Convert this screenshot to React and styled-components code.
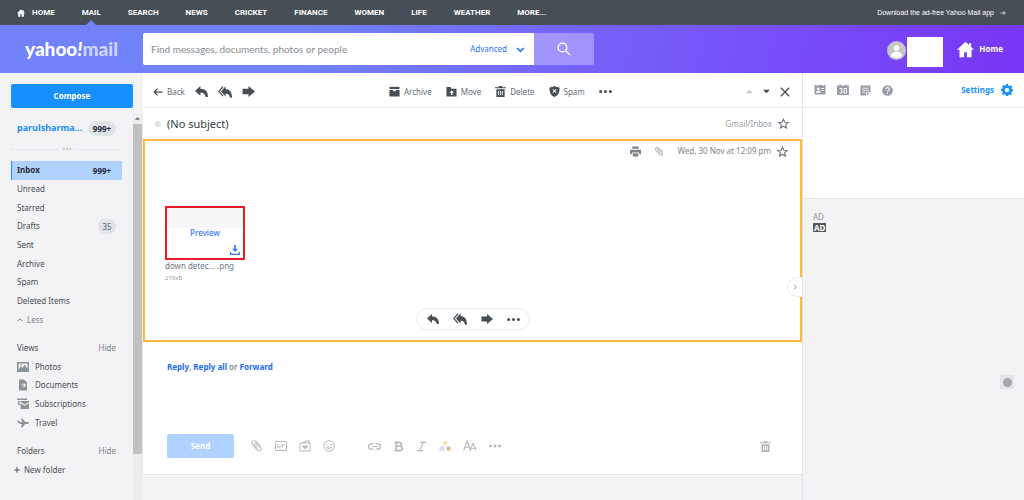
import React from "react";
import styled, { createGlobalStyle } from "styled-components";

const sans = `"Noto Sans", "Open Sans", sans-serif`;

const Global = createGlobalStyle`
  *, *::before, *::after { box-sizing: border-box; }
  body { margin: 0; background: #f3f3f5; font-family: ${sans}; font-size: 8px; line-height: 12px; color: #545c64; }
  button, input { font: inherit; color: inherit; margin: 0; padding: 0; border: 0; background: none; }
  button { cursor: pointer; }
  a { color: inherit; text-decoration: none; }
  ul { list-style: none; margin: 0; padding: 0; }
  h1, h2, p { margin: 0; }
  svg { display: block; flex: none; }
`;

/* ---------- icons ---------- */

const shapes = {
  house: <path d="M12 1 0 12.500h3.500V23H10v-7h4v7h6.500V12.500H24L20 8.500V3h-3v2.700z" />,
  reply: <path d="M10 2 0 11l10 9v-5.500c4.500 0 7.500 1 10 7.500h4c0-10-5-15-14-15z" />,
  replyAll: (
    <>
      <path d="M13 2 5 11l8 8.500V15c4 0 6 1 8 7h3c0-10-4-14.500-11-15z" />
      <path d="M8.500 3 1.500 11l7 8" fill="none" stroke="currentColor" strokeWidth="2.200" />
    </>
  ),
  forward: <path d="M1 7h11V2l12 10-12 10v-5H1z" />,
  back: <path d="M11 4 3 12l8 8M3 12h20" fill="none" stroke="currentColor" strokeWidth="3" />,
  right: <path d="M14 5l7 7-7 7M21 12H2" fill="none" stroke="currentColor" strokeWidth="3" />,
  archive: (
    <>
      <path d="M1 2h22v4.500H1z" />
      <path d="M1 8.500h7.500l1.500 3h4l1.500-3H23V23H1z" />
    </>
  ),
  move: <path fillRule="evenodd" d="M1 2h9l2 4h11v17H1zM12.500 9l-5 5.500H11v5h3v-5h3.500z" />,
  trash: (
    <>
      <path d="M8 0h8v2.500h8V5H0V2.500h8z" />
      <path fillRule="evenodd" d="M3 7h18v17H3zm4 4v9h2V11zm4 0v9h2V11zm4 0v9h2V11z" />
    </>
  ),
  spam: (
    <path
      fillRule="evenodd"
      d="M12 0c3 2 7 3 11 3 0 10-2 17-11 21C3 20 1 13 1 3c4 0 8-1 11-3zM9 6.500 7.500 8l3 3-3 3L9 15.500l3-3 3 3 1.500-1.500-3-3 3-3L15 6.500l-3 3z"
    />
  ),
  more: (
    <>
      <circle cx="3" cy="12" r="2.800" />
      <circle cx="12" cy="12" r="2.800" />
      <circle cx="21" cy="12" r="2.800" />
    </>
  ),
  up: <path d="M0 18 12 6l12 12z" />,
  down: <path d="M0 6l12 12L24 6z" />,
  close: <path d="M2 2l20 20M22 2 2 22" fill="none" stroke="currentColor" strokeWidth="3.200" />,
  star: (
    <path
      d="M12 2.500l3 6.700 7.500.5-5.800 4.900 1.900 7.400L12 18l-6.600 4 1.900-7.400L1.500 9.700 9 9.200z"
      fill="none"
      stroke="currentColor"
      strokeWidth="2.400"
    />
  ),
  printer: (
    <>
      <path d="M5 1h14v5H5zM0 8h24v10h-4v-4H4v4H0z" />
      <path d="M6 16h12v7H6z" />
    </>
  ),
  clip: (
    <path
      transform="rotate(45 12 12)"
      d="M18 7H4a5 5 0 0 0 0 10h16a3.800 3.800 0 0 0 0-7.500H7a2 2 0 0 0 0 4.500h10"
      fill="none"
      stroke="currentColor"
      strokeWidth="1.900"
    />
  ),
  search: <path d="M15 15l7.500 7.500M17 9.500a7.500 7.500 0 1 1-15 0 7.500 7.500 0 0 1 15 0z" fill="none" stroke="currentColor" strokeWidth="2.200" />,
  chevDown: <path d="M3 8l9 9 9-9" fill="none" stroke="currentColor" strokeWidth="4.500" />,
  chevUp: <path d="M2 17l10-10 10 10" fill="none" stroke="currentColor" strokeWidth="4" />,
  chevRight: <path d="M8 3l9 9-9 9" fill="none" stroke="currentColor" strokeWidth="4" />,
  plus: <path d="M12 1v22M1 12h22" fill="none" stroke="currentColor" strokeWidth="4" />,
  contacts: (
    <path
      fillRule="evenodd"
      d="M1 2h4v2h2V2h10v2h2V2h4v19H1zM8.500 7a2.700 2.700 0 1 0 0 5.400 2.700 2.700 0 0 0 0-5.400zM4 17.500h9c0-3-2-4-4.500-4S4 14.500 4 17.500zM15 8v2h5V8zm0 4v2h5v-2z"
    />
  ),
  calendar: (
    <>
      <path d="M0 3h5V1h3v2h8V1h3v2h5v19H0z" />
      <path
        d="M5 9h5v4.500H7m3 0V18H5M14 9h5v9h-5z"
        fill="none"
        stroke="#fff"
        strokeWidth="1.900"
      />
    </>
  ),
  note: (
    <>
      <path d="M1 1h22v14l-8 8H1z" />
      <path d="M5 7h14M5 11.500h14M5 16h6M14 23v-7h9" fill="none" stroke="#fff" strokeWidth="1.800" />
    </>
  ),
  help: (
    <>
      <circle cx="12" cy="12" r="11.500" />
      <path d="M8 9.500C8 4.500 16 4.500 16 9.500c0 3-4 2.500-4 5.500M12 17v2.500" fill="none" stroke="#fff" strokeWidth="2.300" />
    </>
  ),
  gear: (
    <path
      fillRule="evenodd"
      d="M10 0h4l.7 3.300 2.100.9L19.700 2.400l2.800 2.900-1.800 2.800.9 2L24 10.500v4l-2.800.5-.9 2.100 1.700 2.700-2.800 2.800-2.700-1.700-2 .9L14 24h-4l-.6-2.800-2.100-.9-2.700 1.700L1.800 19.200l1.700-2.700-.9-2L0 14v-4l2.800-.6.9-2.100L2 4.600 4.800 1.800l2.700 1.700 2-.9zM12 7.500a4.500 4.500 0 1 0 0 9 4.500 4.500 0 0 0 0-9z"
    />
  ),
  photos: (
    <path
      fillRule="evenodd"
      d="M0 2h24v20H0zM3 5v12l5-7 3 4 4-7 6 9V5zM7 6.500h3v2H7z"
    />
  ),
  document: (
    <path fillRule="evenodd" d="M4 1h10l6 6v16H4zM13 9a3.500 3.500 0 1 0 2 6.500h2V9h-2v1zM12 11a1.800 1.800 0 1 1 0 3.600 1.800 1.800 0 0 1 0-3.600z" />
  ),
  subscriptions: (
    <>
      <path d="M0 1h20v3H0zM2 6h3v8H2z" />
      <path d="M7 6h17v2l-8.500 5L7 8zM7 10.500l8.500 5 8.500-5V22H7z" />
    </>
  ),
  plane: (
    <path d="M0 7h3l3 3h5L8 3h3l6 7h5q4 2 0 4h-6l-5 7H8l2-7H6Q2 13 0 7z" />
  ),
  download: <path d="M10 0h4v9h5l-7 8-7-8h5zM0 17h3v4h18v-4h3v7H0z" />,
  gif: (
    <>
      <rect x="1" y="3" width="22" height="18" rx="1" fill="none" stroke="currentColor" strokeWidth="2" />
      <path d="M9 9.500H5.500v5H9V12M12 9v6M19 9.500h-4V15M15 12h3.500" fill="none" stroke="currentColor" strokeWidth="1.500" />
    </>
  ),
  card: (
    <>
      <path d="M2 6h20v16H2zM6 5l14-4 1 5" fill="none" stroke="currentColor" strokeWidth="2" />
      <path d="M12 19l-5-5c-1-4 4-5 5-2 1-3 6-2 5 2z" />
    </>
  ),
  smile: (
    <>
      <circle cx="12" cy="12" r="10.500" fill="none" stroke="currentColor" strokeWidth="2" />
      <path d="M7 14c1 5 9 5 10 0z" fill="none" stroke="currentColor" strokeWidth="1.800" />
      <circle cx="8" cy="9" r="1.500" />
      <circle cx="16" cy="9" r="1.500" />
    </>
  ),
  link: (
    <path
      d="M10 17H6a5 5 0 0 1 0-10h4M14 7h4a5 5 0 0 1 0 10h-4M7 12h10"
      fill="none"
      stroke="currentColor"
      strokeWidth="2.200"
    />
  ),
  bold: <path d="M3 3h11a4.200 4.200 0 0 1 0 8.500H7h8a4.700 4.700 0 0 1 0 9.500H3M7 3v18" fill="none" stroke="currentColor" strokeWidth="3.600" />,
  italic: <path d="M9 3h13M2 21h13M16 3 8 21" fill="none" stroke="currentColor" strokeWidth="2.600" />,
  colors: (
    <>
      <circle cx="12" cy="6" r="4" fill="#fbdc9b" />
      <circle cx="6" cy="17" r="5.500" fill="#dcdffb" />
      <circle cx="19" cy="17" r="4.500" fill="#dfb98d" />
    </>
  ),
  fontSize: (
    <path d="M1 20 7 3l6 17M3 14h8M12 20l5.500-13L23 20M14 16h7" fill="none" stroke="currentColor" strokeWidth="1.800" />
  ),
};

const Svg = styled.svg.attrs({ viewBox: "0 0 24 24", fill: "currentColor", "aria-hidden": true })`
  width: ${(p) => p.$size}px;
  height: ${(p) => p.$size}px;
`;

const Icon = ({ name, size = 12 }) => <Svg $size={size}>{shapes[name]}</Svg>;

/* ---------- frame ---------- */

const Page = styled.div`
  min-height: 100vh;
  display: flex;
  flex-direction: column;
`;

const TopBar = styled.nav`
  height: 25px;
  padding: 0 18px 0 17px;
  display: flex;
  align-items: center;
  justify-content: space-between;
  background: #464e56;
  color: #fff;
  font-family: Roboto, "Liberation Sans", sans-serif;
`;

const TopLinks = styled.div`
  height: 100%;
  display: flex;
  gap: 27px;
`;

const TopLink = styled.a`
  position: relative;
  display: flex;
  align-items: center;
  gap: 7px;
  font-weight: 700;

  &[aria-current]::after {
    content: "";
    position: absolute;
    bottom: 0;
    left: 50%;
    margin-left: -5px;
    border: 5px solid transparent;
    border-top: 0;
    border-bottom-color: #7182fb;
  }
`;

const AppLink = styled.a`
  display: flex;
  align-items: center;
  gap: 6px;
  font-family: "Liberation Sans", Arial, sans-serif;
  font-size: 7px;
`;

const Header = styled.header`
  height: 48px;
  padding-right: 21px;
  display: flex;
  align-items: center;
  background: linear-gradient(100deg, #7182fb 0%, #7182fb 30%, #7561f9 58%, #7835f5 100%);
  color: #fff;
`;

const Logo = styled.a`
  width: 143px;
  padding-left: 25px;
  font-family: Lato, "Open Sans", sans-serif;
  font-size: 19px;
  line-height: 24px;
  font-weight: 900;

  span { color: #cdd5fd; }
`;

const Search = styled.form`
  flex: 0 1 451px;
  height: 32px;
  display: flex;
  border-radius: 2px;
  overflow: hidden;
`;

const SearchField = styled.div`
  flex: 1;
  min-width: 0;
  padding: 0 9px 0 8px;
  display: flex;
  align-items: center;
  background: #fff;
`;

const SearchInput = styled.input`
  flex: 1;
  min-width: 0;
  height: 100%;
  outline: 0;
  font-family: Lato, ${sans};
  font-size: 10px;
  color: #5b636a;

  &::placeholder { color: #878d94; opacity: 1; }
`;

const Advanced = styled.button`
  display: flex;
  align-items: center;
  gap: 9px;
  color: #2673fb;
`;

const SearchButton = styled.button`
  width: 60px;
  display: grid;
  place-items: center;
  background: #a094fd;
`;

const Account = styled.div`
  margin-left: auto;
  display: flex;
  align-items: center;
`;

const Avatar = styled.button`
  width: 19px;
  height: 19px;
  margin-top: 3px;
  border-radius: 50%;
  background: #c5c5c5;
  overflow: hidden;
  color: #fff;
`;

const NameBox = styled.div`
  width: 36px;
  height: 30px;
  margin: 6px 14px 0 1px;
  background: #fff;
`;

const HomeLink = styled.a`
  display: flex;
  align-items: center;
  gap: 5px;
  font-weight: 700;
`;

const Body = styled.div`
  flex: 1;
  display: flex;
`;

/* ---------- sidebar ---------- */

const Sidebar = styled.aside`
  flex: none;
  width: 143px;
  display: flex;
  flex-direction: column;
  background: #f3f3f5;
`;

const Compose = styled.button`
  height: 24px;
  margin: 11px 10px 5px 11px;
  border-radius: 2px;
  background: #188fff;
  color: #fff;
  font-weight: 700;
`;

const ScrollArea = styled.div`
  flex: 1;
  display: flex;
`;

const Folders = styled.div`
  flex: 1;
  min-width: 0;
  padding: 6px 11px 21px 11px;
`;

const Mailbox = styled.div`
  height: 18px;
  padding: 0 6px;
  display: flex;
  align-items: center;
  justify-content: space-between;
  color: #188fff;
  font-size: 9px;
  font-weight: 700;
`;

const Badge = styled.span`
  min-width: ${(p) => (p.$small ? 18 : 28)}px;
  height: 15px;
  border-radius: 8px;
  text-align: center;
  line-height: 15px;
  font-size: 8px;
  font-weight: ${(p) => (p.$small ? 400 : 700)};
  color: ${(p) => (p.$small ? "#5b636a" : "#232a31")};
  background: ${(p) => (p.$plain ? "none" : "#dfe4ea")};
`;

const Divider = styled.div`
  height: 12px;
  margin: 6px 0 6px;
  display: flex;
  align-items: center;
  gap: 4px;
  color: #b4bac0;

  &::before, &::after { content: ""; flex: 1; border-top: 1px dotted #dcdfe3; }
`;

const List = styled.ul`
  height: ${(p) => p.$height}px;
  margin-bottom: 10px;
  display: grid;
  grid-auto-rows: 1fr;
`;

const Row = styled.li`
  display: flex;
  align-items: center;
  justify-content: space-between;
  padding: 0 6px;
  color: #464e56;

  ${(p) =>
    p.$active &&
    `
    padding-left: 5px;
    border-left: 1px solid #188fff;
    background: #b1d2ff;
    color: #232a31;
    font-weight: 700;
  `}
`;

const RowLink = styled.a`
  display: flex;
  align-items: center;
  gap: ${(p) => p.$gap || 0}px;
  margin-left: ${(p) => (p.$outdent ? -3 : 0)}px;

  svg { color: ${(p) => (p.$muted ? "#8b929b" : "inherit")}; }
`;

const Quiet = styled.button`
  color: #7d848b;
  display: flex;
  align-items: center;
  gap: 4px;
`;

const ScrollBar = styled.div`
  width: 10px;
  padding: 3px 1px 3px 0;
  display: flex;
  flex-direction: column;
  align-items: center;
  background: #ededef;
  color: #62676c;
`;

const Thumb = styled.div`
  flex: 1;
  align-self: stretch;
  margin: 3px 0 48px;
  background: #c1c1c1;
`;

/* ---------- message column ---------- */

const Main = styled.main`
  flex: 1;
  min-width: 0;
  border-right: 1px solid #e0e4e9;
`;

const Toolbar = styled.div`
  height: 35px;
  padding: 3px 12px 0 10px;
  display: flex;
  align-items: center;
  justify-content: space-between;
  background: #fff;
  border-bottom: 1px solid #ebecef;
  color: #464e56;
`;

const Group = styled.div`
  display: flex;
  align-items: center;
  gap: ${(p) => p.$gap}px;
`;

const Tool = styled.button`
  display: flex;
  align-items: center;
  gap: 4px;
  color: ${(p) => p.$color || "#464e56"};

  span { color: #646d75; }
`;

const Subject = styled.div`
  height: 31px;
  padding: 0 13px 0 12px;
  display: flex;
  align-items: center;
  gap: 6px;
  background: #fff;

  h1 { flex: 1; font-size: 11px; line-height: 16px; font-weight: 400; color: #343c44; }
  span { color: #979ea8; }
`;

const Dot = styled.i`
  width: 6px;
  height: 6px;
  border-radius: 50%;
  background: #dfe4ea;
`;

const Message = styled.article`
  position: relative;
  height: 203px;
  padding: 2px 12px 10px 20px;
  display: flex;
  flex-direction: column;
  background: #fff;
  border: 2px solid #fdb93d;
`;

const Meta = styled.div`
  display: flex;
  align-items: center;
  justify-content: flex-end;
  height: 16px;
  color: #7d848b;
`;

const Attachment = styled.figure`
  margin: 47px 0 auto;
  width: 80px;

  figcaption { color: #6e777f; white-space: nowrap; }
  small { display: block; font-size: 6px; color: #979ea8; }
`;

const Thumbnail = styled.button`
  position: relative;
  display: block;
  width: 80px;
  height: 54px;
  border: 2px solid #eb1c26;
  background: linear-gradient(#f8f8f9 20px, #fff 20px);
  color: #3478fb;
  font-weight: 500;

  svg { position: absolute; right: 3px; bottom: 3px; }
`;

const Actions = styled.div`
  align-self: center;
  height: 22px;
  margin-left: -8px;
  padding: 0 9px 0 10px;
  display: flex;
  align-items: center;
  gap: 14px;
  border: 1px solid #ebecef;
  border-radius: 11px;
`;

const Expand = styled.button`
  position: absolute;
  right: -2px;
  top: 136px;
  width: 15px;
  height: 20px;
  display: grid;
  place-items: center;
  border: 1px solid #ebecef;
  border-right: 0;
  border-radius: 10px 0 0 10px;
  background: #fff;
  color: #979ea8;
`;

const Composer = styled.section`
  height: 133px;
  padding: 19px 31px 16px 24px;
  display: flex;
  flex-direction: column;
  justify-content: space-between;
  background: #fff;
  border-bottom: 1px solid #e3e5e9;

  p { color: #7d848b; font-weight: 600; }
  p a { color: #1d6bfb; font-weight: 700; }
`;

const ComposeBar = styled.div`
  display: flex;
  align-items: center;
  color: #b4b7bc;

  & > :last-child { margin-left: auto; }
`;

const Send = styled.button`
  width: 67px;
  height: 24px;
  margin-right: 17px;
  border-radius: 2px;
  background: #b1d2ff;
  color: #fff;
  font-weight: 700;
`;

/* ---------- right column ---------- */

const Rail = styled.aside`
  flex: none;
  width: 221px;
`;

const RailTop = styled.div`
  height: 126px;
  background: #fff;
  border-bottom: 1px solid #e3e5e9;
`;

const RailTools = styled.div`
  height: 35px;
  padding: 0 11px;
  display: flex;
  align-items: center;
  justify-content: space-between;
  border-bottom: 1px solid #ebecef;
`;

const Settings = styled.button`
  display: flex;
  align-items: center;
  gap: 7px;
  color: #188fff;
  font-weight: 700;
`;

const Ad = styled.div`
  padding: 12px 10px;
  color: #8d949c;
  display: flex;
  flex-direction: column;
  align-items: flex-start;

  b { height: 9px; padding: 0 1px; background: #55585c; color: #fff; line-height: 9px; }
`;

const Info = styled.button`
  display: grid;
  place-items: center;
  width: 14px;
  height: 14px;
  margin: 131px 10px 0 auto;
  background: #e4e4e6;

  &::before { content: ""; width: 9px; height: 9px; border-radius: 50%; background: #a5a7ae; }
`;

const topItems = ["MAIL", "SEARCH", "NEWS", "CRICKET", "FINANCE", "WOMEN", "LIFE", "WEATHER", "MORE..."];
const folders = ["Unread", "Starred", "Drafts", "Sent", "Archive", "Spam", "Deleted Items"];
const views = [
  ["photos", "Photos"],
  ["document", "Documents"],
  ["subscriptions", "Subscriptions"],
  ["plane", "Travel"],
];

const IconTool = ({ name, label, size, color }) => (
  <Tool type="button" aria-label={label} $color={color}>
    <Icon name={name} size={size} />
  </Tool>
);

export default function App() {
  return (
    <Page>
      <Global />
      <TopBar>
        <TopLinks>
          <TopLink href="#home">
            <Icon name="house" size={8} />
            HOME
          </TopLink>
          {topItems.map((t) => (
            <TopLink key={t} href="#top" aria-current={t === "MAIL" ? "page" : undefined}>
              {t}
            </TopLink>
          ))}
        </TopLinks>
        <AppLink href="#app">
          Download the ad-free Yahoo Mail app <Icon name="right" size={6} />
        </AppLink>
      </TopBar>

      <Header>
        <Logo href="#mail">
          yahoo<em>!</em>
          <span>mail</span>
        </Logo>
        <Search>
          <SearchField>
            <SearchInput
              type="text"
              aria-label="Search mail"
              placeholder="Find messages, documents, photos or people"
            />
            <Advanced type="button">
              Advanced <Icon name="chevDown" size={9} />
            </Advanced>
          </SearchField>
          <SearchButton type="button" aria-label="Search">
            <Icon name="search" size={14} />
          </SearchButton>
        </Search>
        <Account>
          <Avatar aria-label="Account">
            <svg width="19" height="19" viewBox="0 0 19 19" fill="currentColor" aria-hidden="true">
              <circle cx="9.500" cy="7" r="2.800" />
              <path d="M4 15c0-6 11-6 11 0-3 2.600-8 2.600-11 0z" />
            </svg>
          </Avatar>
          <NameBox />
          <HomeLink href="#home">
            <Icon name="house" size={17} />
            Home
          </HomeLink>
        </Account>
      </Header>

      <Body>
        <Sidebar>
          <Compose type="button">Compose</Compose>
          <ScrollArea>
            <Folders>
              <Mailbox>
                <a href="#account">parulsharma...</a>
                <Badge>999+</Badge>
              </Mailbox>
              <Divider>
                <Icon name="more" size={8} />
              </Divider>
              <List $height={168}>
                <Row $active>
                  <RowLink href="#inbox">Inbox</RowLink>
                  <Badge $plain>999+</Badge>
                </Row>
                {folders.map((f) => (
                  <Row key={f}>
                    <RowLink href="#folder">{f}</RowLink>
                    {f === "Drafts" && <Badge $small>35</Badge>}
                  </Row>
                ))}
                <Row>
                  <Quiet type="button">
                    <Icon name="chevUp" size={6} /> Less
                  </Quiet>
                </Row>
              </List>
              <List $height={93}>
                <Row>
                  Views <Quiet type="button">Hide</Quiet>
                </Row>
                {views.map(([icon, label]) => (
                  <Row key={label}>
                    <RowLink href="#view" $gap={6} $muted>
                      <Icon name={icon} size={12} /> {label}
                    </RowLink>
                  </Row>
                ))}
              </List>
              <List $height={37}>
                <Row>
                  Folders <Quiet type="button">Hide</Quiet>
                </Row>
                <Row>
                  <RowLink href="#new" $gap={4} $outdent>
                    <Icon name="plus" size={6} /> New folder
                  </RowLink>
                </Row>
              </List>
            </Folders>
            <ScrollBar>
              <Icon name="up" size={5} />
              <Thumb />
              <Icon name="down" size={5} />
            </ScrollBar>
          </ScrollArea>
        </Sidebar>

        <Main>
          <Toolbar>
            <Group $gap={10}>
              <Tool type="button">
                <Icon name="back" size={10} />
                <span>Back</span>
              </Tool>
              <IconTool name="reply" label="Reply" size={13} />
              <IconTool name="replyAll" label="Reply all" size={14} />
              <IconTool name="forward" label="Forward" size={13} />
            </Group>
            <Group $gap={14}>
              {[
                ["archive", "Archive"],
                ["move", "Move"],
                ["trash", "Delete"],
                ["spam", "Spam"],
              ].map(([icon, label]) => (
                <Tool type="button" key={label}>
                  <Icon name={icon} size={11} />
                  <span>{label}</span>
                </Tool>
              ))}
              <IconTool name="more" label="More" size={13} />
            </Group>
            <Group $gap={10}>
              <IconTool name="up" label="Previous" size={7} color="#c3c7cc" />
              <IconTool name="down" label="Next" size={7} />
              <IconTool name="close" label="Close" size={10} />
            </Group>
          </Toolbar>

          <Subject>
            <Dot />
            <h1>(No subject)</h1>
            <span>Gmail/Inbox</span>
            <IconTool name="star" label="Star conversation" size={11} color="#6e777f" />
          </Subject>

          <Message>
            <Meta>
              <Group $gap={14}>
                <IconTool name="printer" label="Print" size={11} color="#7d848b" />
                <IconTool name="clip" label="Has attachment" size={9} color="#7d848b" />
                <Group $gap={6}>
                  <time>Wed, 30 Nov at 12:09 pm</time>
                  <IconTool name="star" label="Star message" size={11} color="#6e777f" />
                </Group>
              </Group>
            </Meta>
            <Attachment>
              <Thumbnail type="button">
                Preview
                <Icon name="download" size={10} />
              </Thumbnail>
              <figcaption>
                down detec... .png
                <small>215kB</small>
              </figcaption>
            </Attachment>
            <Actions>
              <IconTool name="reply" label="Reply" />
              <IconTool name="replyAll" label="Reply all" size={14} />
              <IconTool name="forward" label="Forward" />
              <IconTool name="more" label="More" size={13} />
            </Actions>
            <Expand type="button" aria-label="Collapse panel">
              <Icon name="chevRight" size={6} />
            </Expand>
          </Message>

          <Composer>
            <p>
              <a href="#reply">Reply</a>, <a href="#all">Reply all</a> or <a href="#forward">Forward</a>
            </p>
            <ComposeBar>
              <Send type="button">Send</Send>
              <Group $gap={33}>
                <Group $gap={12}>
                  <IconTool name="clip" label="Attach" color="#b4b7bc" />
                  <IconTool name="gif" label="GIF" color="#b4b7bc" />
                  <IconTool name="card" label="Stationery" color="#b4b7bc" />
                  <IconTool name="smile" label="Emoji" color="#b4b7bc" />
                </Group>
                <Group $gap={12}>
                  <IconTool name="link" label="Link" size={13} color="#b4b7bc" />
                  <IconTool name="bold" label="Bold" size={11} color="#b4b7bc" />
                  <IconTool name="italic" label="Italic" size={11} color="#b4b7bc" />
                  <IconTool name="colors" label="Colours" size={12} />
                  <IconTool name="fontSize" label="Text size" size={14} color="#b4b7bc" />
                  <IconTool name="more" label="More" size={12} color="#b4b7bc" />
                </Group>
              </Group>
              <IconTool name="trash" label="Delete draft" size={11} color="#b4b7bc" />
            </ComposeBar>
          </Composer>
        </Main>

        <Rail>
          <RailTop>
            <RailTools>
              <Group $gap={11}>
                <IconTool name="contacts" label="Contacts" size={12} color="#979ea8" />
                <IconTool name="calendar" label="Calendar" size={12} color="#979ea8" />
                <IconTool name="note" label="Notepad" size={11} color="#979ea8" />
                <IconTool name="help" label="Help" size={11} color="#979ea8" />
              </Group>
              <Settings type="button">
                Settings <Icon name="gear" size={12} />
              </Settings>
            </RailTools>
          </RailTop>
          <Ad>
            AD
            <b>AD</b>
          </Ad>
          <Info type="button" aria-label="Information" />
        </Rail>
      </Body>
    </Page>
  );
}
